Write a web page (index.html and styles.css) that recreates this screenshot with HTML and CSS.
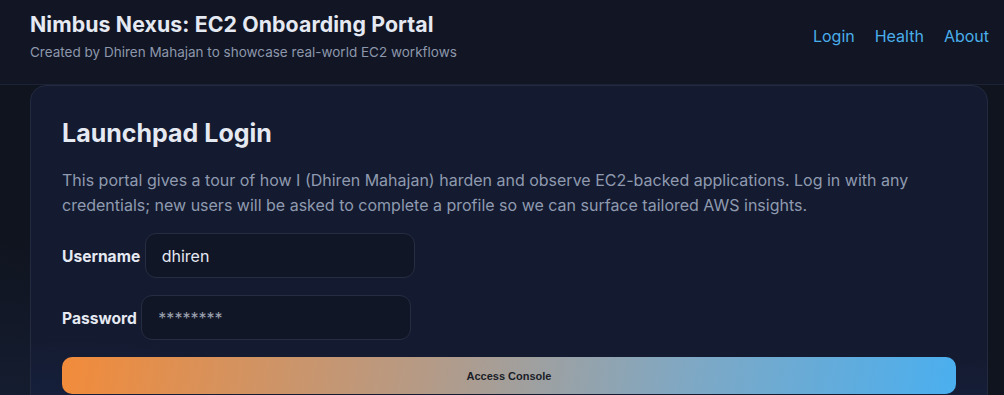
FILE: index.html
```html
<!DOCTYPE html>
<html lang="en">
<head>
    <meta charset="UTF-8">
    <meta name="viewport" content="width=device-width, initial-scale=1.0">
    <title>Nimbus Nexus: EC2 Onboarding Portal</title>
    <link rel="stylesheet" href="styles.css">
</head>
<body>
    <header class="site-header">
        <div class="brand">
            <h1 class="brand-title">Nimbus Nexus: EC2 Onboarding Portal</h1>
            <p class="brand-subtitle">Created by Dhiren Mahajan to showcase real-world EC2 workflows</p>
        </div>
        <nav class="site-nav">
            <a href="#">Login</a>
            <a href="#">Health</a>
            <a href="#">About</a>
        </nav>
    </header>

    <main class="content">
        <section class="card">
            <h2 class="card-title">Launchpad Login</h2>
            <p class="card-intro">This portal gives a tour of how I (Dhiren Mahajan) harden and observe EC2-backed applications. Log in with any credentials; new users will be asked to complete a profile so we can surface tailored AWS insights.</p>

            <form class="login-form">
                <div class="field">
                    <label for="username">Username</label>
                    <input type="text" id="username" value="dhiren">
                </div>
                <div class="field">
                    <label for="password">Password</label>
                    <input type="password" id="password" placeholder="********">
                </div>
                <button type="button" class="submit-btn">Access Console</button>
            </form>
        </section>
    </main>
</body>
</html>
```

FILE: styles.css
```css
* {
    box-sizing: border-box;
}

body {
    margin: 0;
    font-family: 'Inter', 'Noto Sans', sans-serif;
    background-color: #10141f;
    color: #e2e8f0;
    min-height: 100vh;
    overflow: hidden;
}

.site-header {
    display: flex;
    justify-content: space-between;
    align-items: center;
    height: 85px;
    padding: 0 15px 0 30px;
    background-color: #111524;
    border-bottom: 1px solid #1d2336;
}

.brand {
    margin-top: -14px;
}

.brand-title {
    margin: 0 0 7px;
    font-size: 21.3px;
    font-weight: 700;
    color: #e5e9f2;
    letter-spacing: 0.1px;
}

.brand-subtitle {
    margin: 0;
    font-size: 13.5px;
    color: #8d97ab;
}

.site-nav {
    display: flex;
    gap: 20px;
    margin-top: -12px;
}

.site-nav a {
    color: #4aaeea;
    text-decoration: none;
    font-size: 16px;
}

.content {
    padding: 0 16px 0 30px;
    background: radial-gradient(ellipse 300px 200px at 0 100%, rgba(30, 50, 90, 0.35), transparent);
}

.card {
    background:
        radial-gradient(ellipse 260px 140px at 40px 110%, rgba(30, 60, 120, 0.35), transparent),
        radial-gradient(ellipse 200px 120px at 100% 110%, rgba(30, 60, 120, 0.3), transparent),
        #141a2f;
    border: 1px solid #232a40;
    border-radius: 16px;
    padding: 32px 31px 40px;
    min-height: 330px;
}

.card-title {
    margin: 0 0 20px;
    font-size: 25px;
    font-weight: 700;
    color: #e5e9f2;
}

.card-intro {
    margin: 0 0 15px;
    font-size: 16px;
    line-height: 25px;
    color: #8f9ab0;
}

.login-form {
    display: flex;
    flex-direction: column;
    gap: 17px;
}

.field label {
    font-size: 15.6px;
    font-weight: 700;
    color: #e5e9f2;
}

.field input {
    width: 270px;
    height: 45px;
    padding: 0 16px;
    background-color: #111627;
    border: 1px solid #262d42;
    border-radius: 11px;
    font-family: inherit;
    font-size: 16px;
    color: #e5e9f2;
    outline: none;
}

.field input::placeholder {
    color: #9ca3af;
}

.submit-btn {
    width: 894px;
    height: 37px;
    border: none;
    border-radius: 10px;
    background: linear-gradient(100deg, #f28b3a 0%, #b69a85 40%, #7fa8c4 70%, #4aafef 100%);
    font-family: 'Liberation Sans', Arial, sans-serif;
    font-size: 11px;
    font-weight: 700;
    color: #1a1d27;
    cursor: pointer;
}
```
